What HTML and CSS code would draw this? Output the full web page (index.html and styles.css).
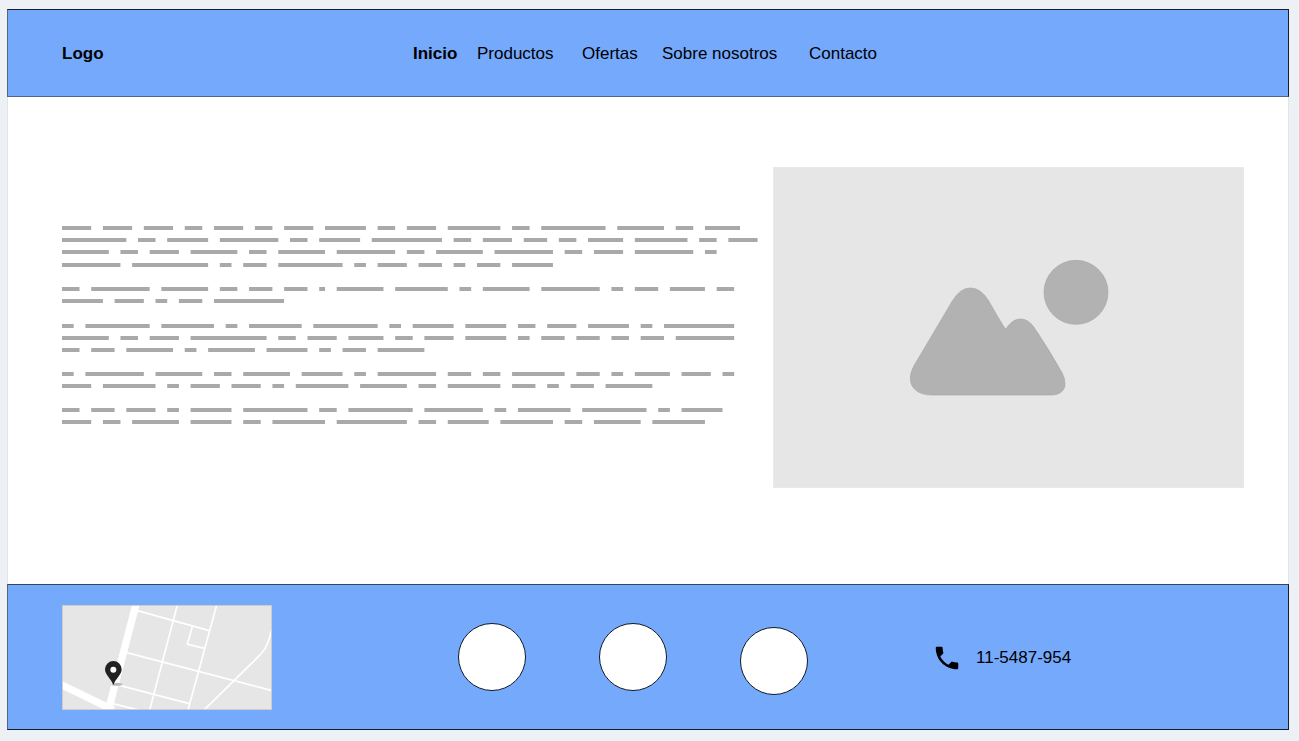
FILE: index.html
```html
<!DOCTYPE html>
<html lang="es">
<head>
<meta charset="utf-8">
<title>Inicio</title>
<link rel="stylesheet" href="styles.css">
</head>
<body>
<div class="page">
  <header class="bar header">
    <strong class="logo">Logo</strong>
    <nav class="nav">
      <a class="current" href="#inicio">Inicio</a>
      <a href="#productos">Productos</a>
      <a href="#ofertas">Ofertas</a>
      <a href="#nosotros">Sobre nosotros</a>
      <a href="#contacto">Contacto</a>
    </nav>
  </header>

  <main class="content">
    <div class="copy" id="copy"></div>
    <svg class="picture" viewBox="0 0 471 321" aria-hidden="true">
      <rect class="picture-bg" x="0.5" y="0.5" width="470" height="320"/>
      <g class="picture-shape" transform="translate(117 73) scale(.33333)">
        <path d="M72 377L187 183Q210 144 241 144Q272 144 295 181L322 228Q340 258 347 268Q366 237 391 237Q415 237 432 262Q475 325 517 400Q525 415 525 432C525 452 508 465 485 465H125C85 465 61 445 61 415Q61 397 72 377Z"/>
        <circle cx="558" cy="157" r="96"/>
      </g>
    </svg>
  </main>

  <footer class="bar footer">
    <svg class="map" viewBox="36 30 630 315" aria-hidden="true">
      <rect class="map-bg" x="36" y="30" width="630" height="315"/>
      <g class="road">
        <path class="wide" d="M259 24L174 350"/>
        <path class="wide" d="M30 267L190 345"/>
        <path d="M262 47L478 107M230 173L664 286M200 269L418 326M185 325L270 346"/>
        <path d="M382 30L299 345M500 30L414 345M427 95L412 148L464 160"/>
        <path d="M462 345L620 190C648 163 654 148 665 105"/>
      </g>
      <ellipse class="pin-shadow" cx="201" cy="268" rx="17" ry="5"/>
      <path class="pin" d="M190 270C182 249 165 240 165 223A25 25 0 0 1 215 223C215 240 198 249 190 270Z"/>
      <circle class="pin-hole" cx="190" cy="224" r="9"/>
      <rect class="map-edge" x="37" y="31" width="628" height="313"/>
    </svg>
    <ul class="circles">
      <li></li>
      <li></li>
      <li class="low"></li>
    </ul>
    <a class="phone" href="tel:115487954">
      <svg class="phone-icon" viewBox="0 0 24 24" aria-hidden="true"><path d="M6.62 10.79c1.44 2.83 3.76 5.14 6.59 6.59l2.2-2.2c.27-.27.67-.36 1.02-.24 1.12.37 2.33.57 3.57.57.55 0 1 .45 1 1V20c0 .55-.45 1-1 1-9.39 0-17-7.61-17-17 0-.55.45-1 1-1h3.5c.55 0 1 .45 1 1 0 1.25.2 2.45.57 3.57.11.35.03.74-.25 1.02l-2.2 2.2z"/></svg>
      <span>11-5487-954</span>
    </a>
  </footer>
</div>
<script src="copy.js"></script>
</body>
</html>
```

FILE: styles.css
```css
* {
  box-sizing: border-box;
}

body {
  margin: 0;
  padding: 9px 10px 11px 7px;
  background: #edf1f6;
  color: #000;
  font: 17px/20px "Liberation Sans", Arial, sans-serif;
}

.page {
  background: #fff;
}

.bar {
  background: #75a9fc;
  border: 1px solid #14202e;
  border-left-color: #4f6684;
}

.header {
  display: grid;
  grid-template-columns: 351px 1fr;
  padding: 34px 44px 32px 54px;
  border-bottom-color: #4f6684;
}

.nav {
  display: grid;
  grid-template-columns: 64px 105px 80px 147px auto;
}

.nav a,
.phone {
  color: inherit;
  text-decoration: none;
  white-space: nowrap;
}

.nav .current {
  font-weight: bold;
}

.content {
  display: grid;
  grid-template-columns: 697fr 471fr;
  gap: 14px;
  align-items: center;
  padding: 70px 44px 96px 54px;
  border: solid #e1e5e9;
  border-width: 0 1px;
}

.copy {
  display: flex;
  flex-direction: column;
  gap: 20px;
  padding-bottom: 6px;
}

.copy svg {
  display: block;
  width: 100%;
  fill: #a9a9a9;
}

.picture {
  display: block;
  width: 100%;
}

.picture-bg {
  fill: #e6e6e6;
  stroke: #e9e9e9;
}

.picture-shape {
  fill: #b2b2b2;
  stroke: #a6a6a6;
  stroke-width: 2;
}

.footer {
  display: flex;
  align-items: flex-start;
  padding: 20px 44px 19px 54px;
  border-top-color: #35475f;
}

.map {
  display: block;
  width: 210px;
  height: 105px;
}

.map-bg {
  fill: #e6e6e6;
}

.map-edge {
  fill: none;
  stroke: #cbc8c2;
  stroke-width: 3;
}

.road {
  fill: none;
  stroke: #fff;
  stroke-width: 5;
}

.road .wide {
  stroke-width: 22;
}

.pin {
  fill: #222;
}

.pin-hole {
  fill: #fff;
}

.pin-shadow {
  fill: #bbb;
}

.circles {
  display: flex;
  gap: 73px;
  height: 72px;
  margin: 18px 124px 0 186px;
  padding: 0;
  list-style: none;
}

.circles li {
  width: 68px;
  height: 68px;
  border: 1px solid #111a26;
  border-radius: 50%;
  background: #fff;
}

.circles .low {
  align-self: flex-end;
}

.phone {
  display: flex;
  align-items: center;
  align-self: center;
  gap: 14px;
}

.phone-icon {
  width: 30px;
  height: 30px;
}
```

FILE: copy.js
```js
// Placeholder copy: each number is the length of a word in characters.
const CHAR = 5.845;
const WIDTH = 697;
const BAR = 4;

const paragraphs = [
  { height: 41, lines: [
    [0, [5, 5, 5, 3, 5, 3, 5, 7, 3, 5, 9, 3, 11, 8, 3, 6]],
    [12, [11, 3, 7, 10, 3, 7, 12, 3, 5, 4, 3, 6, 9, 3, 5]],
    [24, [8, 3, 5, 8, 3, 8, 10, 3, 8, 10, 3, 5, 10, 2]],
    [37, [10, 13, 2, 4, 11, 2, 5, 4, 2, 4, 7]],
  ] },
  { height: 17, lines: [
    [0, [3, 10, 8, 3, 4, 4, 1, 8, 9, 2, 8, 10, 2, 4, 6, 3]],
    [12, [7, 5, 2, 4, 12]],
  ] },
  { height: 28, lines: [
    [0, [2, 11, 9, 2, 9, 11, 2, 7, 7, 3, 5, 7, 2, 12]],
    [12, [8, 3, 5, 13, 3, 5, 6, 3, 5, 7, 2, 4, 4, 3, 4, 10]],
    [24, [3, 4, 8, 2, 8, 7, 2, 4, 8]],
  ] },
  { height: 16, lines: [
    [0, [2, 10, 8, 3, 8, 7, 2, 10, 4, 3, 9, 4, 2, 6, 5, 2]],
    [12, [5, 9, 2, 5, 5, 2, 9, 8, 3, 9, 4, 2, 4, 8]],
  ] },
  { height: 16, lines: [
    [0, [3, 4, 5, 2, 7, 11, 3, 11, 10, 2, 9, 11, 2, 7]],
    [12, [5, 3, 8, 7, 3, 9, 12, 3, 7, 9, 3, 8, 9]],
  ] },
];

const NS = "http://www.w3.org/2000/svg";
const copy = document.getElementById("copy");

for (const { height, lines } of paragraphs) {
  const svg = document.createElementNS(NS, "svg");
  svg.setAttribute("viewBox", `0 0 ${WIDTH} ${height}`);
  svg.setAttribute("aria-hidden", "true");
  let d = "";
  for (const [y, words] of lines) {
    let column = 0;
    for (const length of words) {
      const w = length * CHAR;
      d += `M${column * CHAR} ${y}h${w}v${BAR}h${-w}z`;
      column += length + 2;
    }
  }
  const path = document.createElementNS(NS, "path");
  path.setAttribute("d", d);
  svg.append(path);
  copy.append(svg);
}
```
